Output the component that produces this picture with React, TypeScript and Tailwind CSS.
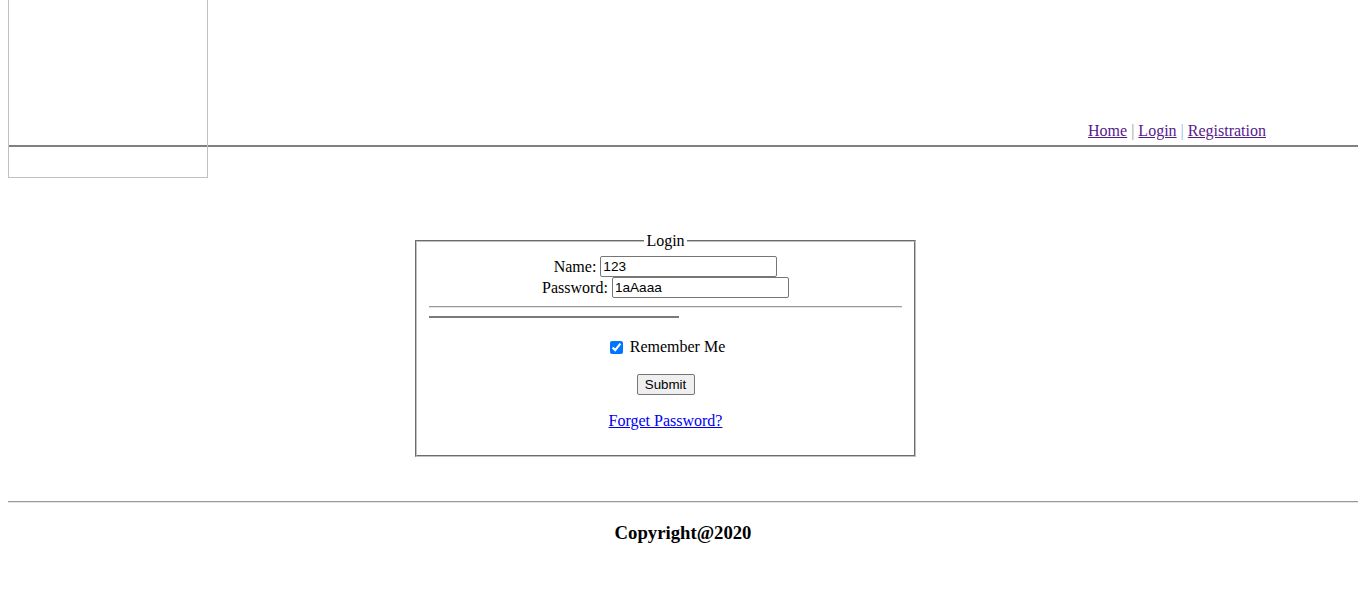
export default function App() {
  return (
    <div className="relative min-h-[600px] bg-white px-2 font-['Liberation_Serif',serif] text-[16px] text-black">
      {/* broken logo image */}
      <div className="absolute left-2 top-0 h-[178px] w-[200px] border-x border-b border-[#c0c0c0]" />

      <header className="flex h-[145px] items-end justify-end pb-[5px] pr-[92px] leading-[18px]">
        <a href="#" className="text-[#551a8b] underline">Home</a>
        <span className="mx-[4px] text-[#999]">|</span>
        <a href="#" className="text-[#551a8b] underline">Login</a>
        <span className="mx-[4px] text-[#8fb8e8]">|</span>
        <a href="#" className="text-[#551a8b] underline">Registration</a>
      </header>
      <div className="h-[2px] bg-[#808080]" />

      <fieldset className="ml-[407px] mt-[85px] w-[501px] border-2 border-[#c0c0c0] px-3 pb-[25px] [border-style:groove]">
        <legend className="mx-auto px-[2px] leading-[18px]">Login</legend>
        <div className="pt-[6px]">
          <div className="flex h-[21px] items-center justify-center">
            <span>Name:</span>
            <input
              type="text"
              defaultValue="123"
              className="ml-[4px] box-border h-[21px] w-[177px] rounded-[2px] border border-[#767676] px-[2px] font-['Liberation_Sans',sans-serif] text-[13.6px] text-black"
            />
          </div>
          <div className="flex h-[21px] items-center justify-center">
            <span>Password:</span>
            <input
              type="text"
              defaultValue="1aAaaa"
              className="ml-[4px] box-border h-[21px] w-[177px] rounded-[2px] border border-[#767676] px-[2px] font-['Liberation_Sans',sans-serif] text-[13.6px] text-black"
            />
          </div>

          <div className="mt-[8px] border-t border-b border-t-[#9a9a9a] border-b-[#e4e4e4]" />
          <div className="mt-[8px] h-[2px] w-[250px] bg-[#7a7a7a]" />

          <div className="mt-[20px] flex h-[18px] items-center justify-center">
            <input type="checkbox" defaultChecked className="ml-[4px] mr-[3px] h-[13px] w-[13px]" />
            <span className="ml-[4px]">Remember Me</span>
          </div>

          <div className="mt-[18px] flex justify-center">
            <button
              type="button"
              className="box-border h-[21px] w-[58px] rounded-[2px] border border-[#767676] bg-[#efefef] font-['Liberation_Sans',sans-serif] text-[13.33px] text-black"
            >
              Submit
            </button>
          </div>

          <div className="mt-[17px] text-center leading-[18px]">
            <a href="#" className="text-[#0000ee] underline">Forget Password?</a>
          </div>
        </div>
      </fieldset>

      <footer className="mt-[44px]">
        <div className="border-t border-b border-t-[#9a9a9a] border-b-[#e4e4e4]" />
        <h3 className="mt-[19px] text-center text-[18.72px] font-bold leading-[22px]">Copyright@2020</h3>
      </footer>
    </div>
  );
}
